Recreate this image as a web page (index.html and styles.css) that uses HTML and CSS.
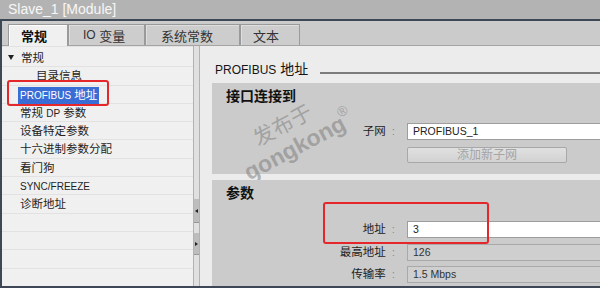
FILE: index.html
```html
<!DOCTYPE html>
<html lang="zh">
<head>
<meta charset="utf-8">
<title>Slave_1 [Module]</title>
<link rel="stylesheet" href="styles.css">
</head>
<body>
<div class="titlebar">Slave_1 [Module]</div>
<div class="frame">
  <div class="tabs">
    <div class="tab tab-general active">常规</div>
    <div class="tab tab-io"><span class="lat-tab">IO</span>&nbsp;变量</div>
    <div class="tab tab-sys">系统常数</div>
    <div class="tab tab-text">文本</div>
  </div>
  <div class="body">
    <div class="tree">
      <div class="row row-top"><span class="caret"></span>常规</div>
      <div class="row row-sub">目录信息</div>
      <div class="row"><span class="sel"><span class="lat">PROFIBUS</span> 地址</span></div>
      <div class="row">常规 <span class="lat">DP</span> 参数</div>
      <div class="row">设备特定参数</div>
      <div class="row">十六进制参数分配</div>
      <div class="row">看门狗</div>
      <div class="row"><span class="lat">SYNC/FREEZE</span></div>
      <div class="row">诊断地址</div>
      <div class="mark mark-tree"></div>
    </div>
    <div class="splitter">
      <div class="sbtn sbtn-left"><span class="arrow-left"></span></div>
      <div class="sbtn sbtn-right"><span class="arrow-right"></span></div>
    </div>
    <div class="panel">
      <div class="ph">
        <span class="pht"><span class="lat-head">PROFIBUS</span> 地址</span>
        <span class="phl"></span>
      </div>
      <div class="sec sec-iface">
        <div class="sh">接口连接到</div>
        <div class="form">
          <div class="lbl">子网<span class="colon">:</span></div>
          <div class="inp">PROFIBUS_1</div>
          <div></div>
          <div class="btn">添加新子网</div>
        </div>
        <div class="wm">
          <div class="wm1">发布于</div>
          <div class="wm2">gongkong<span class="reg">®</span></div>
        </div>
      </div>
      <div class="sec sec-params">
        <div class="sh">参数</div>
        <div class="form">
          <div class="lbl">地址<span class="colon">:</span></div>
          <div class="inp">3</div>
          <div class="lbl">最高地址<span class="colon">:</span></div>
          <div class="inp ro">126</div>
          <div class="lbl">传输率<span class="colon">:</span></div>
          <div class="inp ro">1.5 Mbps</div>
        </div>
        <div class="mark mark-addr"></div>
      </div>
    </div>
  </div>
</div>
</body>
</html>
```

FILE: styles.css
```css
html, body {
  margin: 0;
  padding: 0;
}
body {
  width: 600px;
  height: 288px;
  overflow: hidden;
  font-family: "Liberation Sans", "Noto Sans CJK SC", sans-serif;
  background: #ececec;
}

.titlebar {
  height: 19px;
  border-bottom: 2px solid #3d4756;
  background: #b3b3b3;
  color: #f7f7f7;
  font-size: 14px;
  line-height: 19px;
  padding-left: 8px;
}

.frame {
  height: 265px;
  border-left: 2px solid #3d4756;
  border-bottom: 2px solid #3d4756;
  display: flex;
  flex-direction: column;
}

.tabs {
  height: 25px;
  flex: none;
  box-sizing: border-box;
  background: #cbcbcb;
  border-bottom: 1px solid #a4a4a4;
  display: flex;
  align-items: flex-end;
  padding-left: 6px;
}
.tab {
  box-sizing: border-box;
  height: 21px;
  border: 1px solid #9a9a9a;
  border-bottom: none;
  background: #cdcdcd;
  box-shadow: inset 1px 1px 0 #dedede;
  font-size: 13px;
  color: #333;
  display: flex;
  align-items: center;
  padding-left: 12px;
  margin-bottom: 0;
}
.tab.active {
  height: 22px;
  margin-bottom: -1px;
  background: #f0f0f0;
  box-shadow: inset 1px 1px 0 #ffffff;
  font-weight: bold;
  color: #111;
  position: relative;
}
.tab-general { width: 60px; }
.tab-io { width: 77px; padding-left: 14px; }
.tab-sys { width: 95px; padding-left: 15px; }
.tab-text { width: 60px; }
.lat-tab { font-size: 12px; }

.body {
  flex: 1;
  display: flex;
  min-height: 0;
}

.tree {
  width: 191px;
  flex: none;
  box-sizing: border-box;
  padding-top: 3px;
  position: relative;
  background-color: #f0f0f0;
  background-image: repeating-linear-gradient(to bottom, transparent 0, transparent 17.3px, #e2e2e2 17.3px, #e2e2e2 18.3px);
  background-position: 0 3px;
}
.row {
  height: 18.3px;
  line-height: 18.3px;
  font-size: 11.5px;
  padding-left: 18px;
  color: #1e1e1e;
  white-space: nowrap;
}
.row-top { padding-left: 6px; }
.row-sub { padding-left: 34px; }
.caret {
  display: inline-block;
  width: 0;
  height: 0;
  border-left: 3.5px solid transparent;
  border-right: 3.5px solid transparent;
  border-top: 5px solid #222;
  margin-right: 7px;
  vertical-align: 2px;
}
.lat { font-size: 10px; }
.sel {
  display: inline-block;
  background: #3a6cd6;
  color: #fff;
  line-height: 16px;
  padding: 0 2px;
  margin-left: -2px;
}

.mark {
  position: absolute;
  box-sizing: border-box;
  border: 2px solid #e5262b;
  border-radius: 3px;
}
.mark-tree { left: 5px; top: 34px; width: 102px; height: 26px; }
.mark-addr { left: 111px; top: 22px; width: 166px; height: 42px; }

.splitter {
  width: 7px;
  flex: none;
  box-sizing: border-box;
  border-left: 1px solid #b2b2b2;
  border-right: 1px solid #b2b2b2;
  background: #e0e0e0;
  display: flex;
  flex-direction: column;
}
.sbtn {
  background: #bdbdbd;
  border-bottom: 1px solid #989898;
  display: flex;
  align-items: center;
  justify-content: center;
}
.sbtn-left { margin-top: 153px; height: 23px; }
.sbtn-right { margin-top: 10px; height: 21px; }
.arrow-left {
  width: 0; height: 0;
  border-top: 2.5px solid transparent;
  border-bottom: 2.5px solid transparent;
  border-right: 3px solid #222;
}
.arrow-right {
  width: 0; height: 0;
  border-top: 2.5px solid transparent;
  border-bottom: 2.5px solid transparent;
  border-left: 3px solid #222;
}

.panel {
  flex: 1;
  min-width: 0;
  padding-left: 12px;
  display: flex;
  flex-direction: column;
  overflow: hidden;
  background: #ececec;
}
.ph {
  height: 37px;
  flex: none;
  box-sizing: border-box;
  padding-top: 7px;
  padding-left: 3px;
  display: flex;
  align-items: center;
}
.pht {
  font-size: 14px;
  color: #151515;
  white-space: nowrap;
}
.lat-head { font-size: 12px; }
.phl {
  flex: 1;
  height: 2px;
  margin-left: 12px;
  margin-top: 10px;
  background: #7c7c7c;
}

.sec {
  position: relative;
  flex: none;
  box-sizing: border-box;
  background: #cbcbcb;
  padding: 4px 0 0 14px;
}
.sec-iface { height: 91px; margin-bottom: 6px; }
.sec-params { flex: 1; }
.sh {
  font-size: 14px;
  font-weight: bold;
  line-height: 18px;
  color: #111;
}
.form {
  display: grid;
  grid-template-columns: 181px 1fr;
  margin-right: -2px;
}
.sec-iface .form {
  margin-top: 18px;
  grid-template-rows: 17px 16px;
  row-gap: 7px;
}
.sec-params .form {
  margin-top: 19px;
  grid-auto-rows: 17px;
  row-gap: 5.5px;
}
.lbl {
  font-size: 11.5px;
  line-height: 17px;
  text-align: right;
  padding-right: 12px;
  color: #222;
}
.colon {
  margin-left: 6px;
  color: #8a8a8a;
}
.inp {
  box-sizing: border-box;
  border: 1px solid #9d9d9d;
  background: #fff;
  font-size: 10.5px;
  line-height: 15px;
  padding-left: 5px;
  color: #222;
}
.inp.ro {
  background: #cfcfcf;
  border-color: #a9a9a9;
  color: #333;
}
.btn {
  box-sizing: border-box;
  width: 160px;
  border: 1px solid #a8a8a8;
  border-radius: 2px;
  background: linear-gradient(#e0e0e0, #d2d2d2);
  color: #a4a4a4;
  font-size: 12px;
  line-height: 14px;
  text-align: center;
}

.wm {
  position: absolute;
  left: 7px;
  top: 29px;
  width: 140px;
  text-align: center;
  transform: rotate(-28deg);
  color: rgba(120, 120, 120, 0.5);
  pointer-events: none;
}
.wm1 {
  font-size: 21px;
  line-height: 24px;
}
.wm2 {
  position: relative;
  font-size: 23px;
  line-height: 26px;
  font-weight: bold;
}
.reg {
  position: absolute;
  left: 124px;
  top: -4px;
  font-size: 14px;
  line-height: 14px;
  font-weight: normal;
}
```
